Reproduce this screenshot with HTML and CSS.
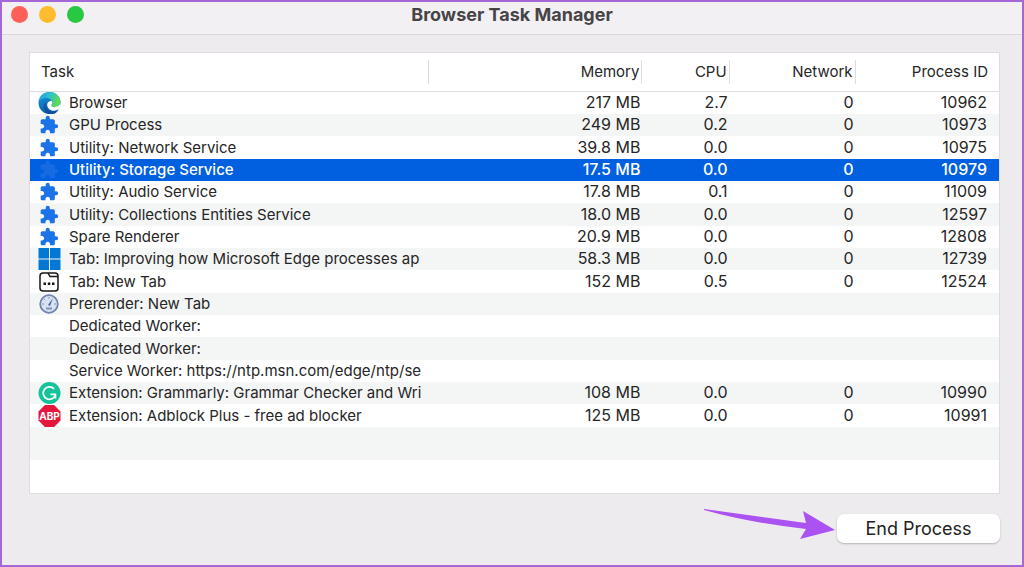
FILE: index.html
```html
<!DOCTYPE html>
<html lang="en">
<head>
<meta charset="utf-8">
<title>Browser Task Manager</title>
<link rel="stylesheet" href="styles.css">
</head>
<body>
<svg class="defs" aria-hidden="true">
  <defs>
    <linearGradient id="edge-top" x1="0" y1="0" x2="1" y2="0.3"><stop offset="0" stop-color="#1b9de2"/><stop offset="0.5" stop-color="#2bc0cf"/><stop offset="1" stop-color="#62d957"/></linearGradient>
    <linearGradient id="edge-side" x1="0" y1="0" x2="0.4" y2="1"><stop offset="0" stop-color="#1b9de2"/><stop offset="1" stop-color="#0c59a4"/></linearGradient>
    <symbol id="puzzle" viewBox="0 0 24 24"><path fill="currentColor" d="M20.5 11H19V7c0-1.1-.9-2-2-2h-4V3.500a2.500 2.500 0 0 0-5 0V5H4c-1.100 0-2 .9-2 2v3.800h1.500c1.500 0 2.700 1.200 2.700 2.700S5 16.200 3.500 16.200H2V20c0 1.100.9 2 2 2h3.800v-1.500c0-1.500 1.200-2.700 2.700-2.700s2.700 1.200 2.700 2.700V22H17c1.100 0 2-.9 2-2v-4h1.500a2.500 2.500 0 0 0 0-5z"/></symbol>
  </defs>
</svg>
<main class="window">
  <header class="titlebar">
    <div class="lights">
      <button class="light close" aria-label="Close"></button>
      <button class="light minimize" aria-label="Minimize"></button>
      <button class="light zoom" aria-label="Zoom"></button>
    </div>
    <h1 class="title">Browser Task Manager</h1>
  </header>
  <section class="content">
    <div class="panel">
      <table class="tasks">
        <colgroup><col class="col-task"><col class="col-memory"><col class="col-cpu"><col class="col-network"><col class="col-pid"></colgroup>
        <thead>
          <tr><th scope="col"><span>Task</span></th><th scope="col"><span>Memory</span></th><th scope="col"><span>CPU</span></th><th scope="col"><span>Network</span></th><th scope="col"><span>Process ID</span></th></tr>
        </thead>
        <tbody>
          <tr><td><div class="task"><svg class="icon large" viewBox="0 0 24 24"><circle cx="12" cy="12" r="12" fill="url(#edge-side)"/><path fill="url(#edge-top)" d="M0 11C1 4 6 0 12 0c7 0 12 5 12 10.500 0 4-3 6-6.500 6-2.500 0-3.500-1-3.500-2 0-.8 1-1 1-3C15 9 12 6.500 8.500 6.500 4.500 6.500 1 8.500 0 11z"/><path fill="#0d4f9e" d="M8.500 11C6 16 10 22 16 21.500c2.500 0 4.500-1 6-2.500-3 6-9 6-12 4.500C5 21 4.500 14 8.500 11z"/><path fill="#fff" d="M14.500 10c-2.500-.5-5 1-5 4 0 4 4 7 8 6.500 2.500-.3 4.500-1.500 6-3.500l.5-5c-1 3-3.500 4.500-6.500 4.500-2.500 0-3.500-1-3.500-2 0-.8 1-1 1-3z"/></svg><span>Browser</span></div></td><td>217 MB</td><td>2.7</td><td>0</td><td>10962</td></tr>
          <tr><td><div class="task"><svg class="icon"><use href="#puzzle"/></svg><span>GPU Process</span></div></td><td>249 MB</td><td>0.2</td><td>0</td><td>10973</td></tr>
          <tr><td><div class="task"><svg class="icon"><use href="#puzzle"/></svg><span>Utility: Network Service</span></div></td><td>39.8 MB</td><td>0.0</td><td>0</td><td>10975</td></tr>
          <tr class="selected"><td><div class="task"><svg class="icon"><use href="#puzzle"/></svg><span>Utility: Storage Service</span></div></td><td>17.5 MB</td><td>0.0</td><td>0</td><td>10979</td></tr>
          <tr><td><div class="task"><svg class="icon"><use href="#puzzle"/></svg><span>Utility: Audio Service</span></div></td><td>17.8 MB</td><td>0.1</td><td>0</td><td>11009</td></tr>
          <tr><td><div class="task"><svg class="icon"><use href="#puzzle"/></svg><span>Utility: Collections Entities Service</span></div></td><td>18.0 MB</td><td>0.0</td><td>0</td><td>12597</td></tr>
          <tr><td><div class="task"><svg class="icon"><use href="#puzzle"/></svg><span>Spare Renderer</span></div></td><td>20.9 MB</td><td>0.0</td><td>0</td><td>12808</td></tr>
          <tr><td><div class="task"><svg class="icon large" viewBox="0 0 23 23"><path fill="#0078d4" d="M0 0h11v11H0zM12 0h11v11H12zM0 12h11v11H0zM12 12h11v11H12z"/></svg><span>Tab: Improving how Microsoft Edge processes ap</span></div></td><td>58.3 MB</td><td>0.0</td><td>0</td><td>12739</td></tr>
          <tr><td><div class="task"><svg class="icon" viewBox="0 0 20 20"><rect x="1" y="1" width="18" height="18" rx="3" fill="#fff" stroke="#161616" stroke-width="1.500"/><path d="M9 1l2 3.500h8" fill="none" stroke="#161616" stroke-width="1.500"/><path d="M4.500 10.500h2.500v2.500H4.500zM8.800 10.500h2.500v2.500H8.800zM13 10.500h2.500v2.500H13z" fill="#161616"/></svg><span>Tab: New Tab</span></div></td><td>152 MB</td><td>0.5</td><td>0</td><td>12524</td></tr>
          <tr><td><div class="task"><svg class="icon gauge" viewBox="0 0 20 20"><circle cx="10" cy="10" r="8.800" fill="#d9e2f2" stroke="#7084ad" stroke-width="1.800"/><path d="M10 3v2M3 10h2M15 10h2M5 5l1 1" stroke="#8193b8"/><path d="M14 4l-3 8-2-1z" fill="#4a679f"/><path d="M7 14.500h6" stroke="#8193b8" stroke-width="2"/></svg><span>Prerender: New Tab</span></div></td><td></td><td></td><td></td><td></td></tr>
          <tr><td><div class="task"><i class="icon"></i><span>Dedicated Worker:</span></div></td><td></td><td></td><td></td><td></td></tr>
          <tr><td><div class="task"><i class="icon"></i><span>Dedicated Worker:</span></div></td><td></td><td></td><td></td><td></td></tr>
          <tr><td><div class="task"><i class="icon"></i><span>Service Worker: https://ntp.msn.com/edge/ntp/se</span></div></td><td></td><td></td><td></td><td></td></tr>
          <tr><td><div class="task"><svg class="icon large" viewBox="0 0 24 24"><circle cx="12" cy="12" r="12" fill="#15c39a"/><path d="M17 7.500a6.800 6.800 0 1 0 1.500 6.500M13 13.500h5.500v4.500" fill="none" stroke="#fff" stroke-width="1.800"/></svg><span>Extension: Grammarly: Grammar Checker and Wri</span></div></td><td>108 MB</td><td>0.0</td><td>0</td><td>10990</td></tr>
          <tr><td><div class="task"><svg class="icon large" viewBox="0 0 24 24"><path fill="#e5173c" d="M7 0h10l7 7v10l-7 7H7l-7-7V7z"/><text x="12" y="16" text-anchor="middle" class="abp">ABP</text></svg><span>Extension: Adblock Plus - free ad blocker</span></div></td><td>125 MB</td><td>0.0</td><td>0</td><td>10991</td></tr>
          <tr class="filler"><td></td><td></td><td></td><td></td><td></td></tr>
        </tbody>
      </table>
    </div>
    <footer class="actions">
      <svg class="arrow" viewBox="0 0 136 34" aria-hidden="true"><path fill="#ab52f2" d="M3 0L105 14l-3-12 32 19-35 9 6-10Q50 14 3 1z"/></svg>
      <button class="end">End Process</button>
    </footer>
  </section>
</main>
</body>
</html>
```
FILE: styles.css
```css
* { box-sizing: border-box; }
body { margin: 0; background: #edebed; color: #262626; font-family: Inter, "Liberation Sans", sans-serif; font-size: 16px; }
.defs { position: absolute; width: 0; height: 0; }
.window { display: flex; flex-direction: column; min-height: 100vh; border: 2px solid #a566d6; }
.titlebar { display: grid; grid-template-columns: 1fr auto 1fr; align-items: center; height: 33px; padding: 0 9px 7px; background: #f2f0f3; border-bottom: 1px solid #d9d7da; }
.lights { display: flex; gap: 11px; }
.light { width: 17px; height: 17px; padding: 0; border: 0; border-radius: 50%; }
.close { background: #fe5f57; }
.minimize { background: #febc2e; }
.zoom { background: #28c840; }
.title { margin: 0; color: #464447; font-size: 18px; line-height: 20px; font-weight: 700; }
.content { flex: 1; display: flex; flex-direction: column; padding: 17px 22px 0 27px; }
.panel { min-height: 442px; background: #fff; border: 1px solid #dedcde; }
.tasks { width: 100%; table-layout: fixed; border-collapse: separate; border-spacing: 0; }
.col-task { width: 41.200%; }
.col-memory { width: 22%; }
.col-cpu { width: 9%; }
.col-network { width: 13%; }
th { height: 39px; padding: 0; border-bottom: 1px solid #dedede; font-size: 15px; font-weight: 400; text-align: right; }
th span { display: block; height: 24px; line-height: 24px; padding-right: 2px; border-right: 1px solid #dcdcdc; }
th:first-child span { padding-left: 11px; text-align: left; }
th:last-child span { padding-right: 11px; border-right: 0; }
td { height: 22px; padding: 0 2px 1px 0; line-height: 21px; text-align: right; white-space: nowrap; }
td:first-child { padding: 0; }
td:last-child { padding-right: 12px; }
tbody tr:nth-child(3n) td { height: 23px; }
tbody tr:nth-child(even) td { background: #f4f5f5; }
tbody tr.selected td { background: #0060df; color: #fff; font-weight: 500; }
tbody tr.filler td { height: 33px; }
.task { display: flex; align-items: center; height: 22px; padding-left: 9px; overflow: hidden; text-align: left; font-size: 15px; line-height: 22px; }
.icon { flex: none; width: 20px; height: 20px; margin-right: 10px; color: #1a73e8; }
.large { width: 23px; height: 22px; margin: 0 8px 0 -1px; }
.selected .icon { color: #176be2; }
.abp { fill: #fff; font-size: 11px; font-weight: 700; }
.actions { display: flex; justify-content: flex-end; align-items: flex-start; padding-top: 15px; }
.arrow { width: 136px; height: 34px; }
.end { width: 163px; height: 29px; margin-top: 5px; padding: 0; border: 0; border-radius: 7px; background: #fff; box-shadow: 0 1px 2px #b5b3b5; color: #222; font-family: inherit; font-size: 18px; line-height: 28px; }
```
